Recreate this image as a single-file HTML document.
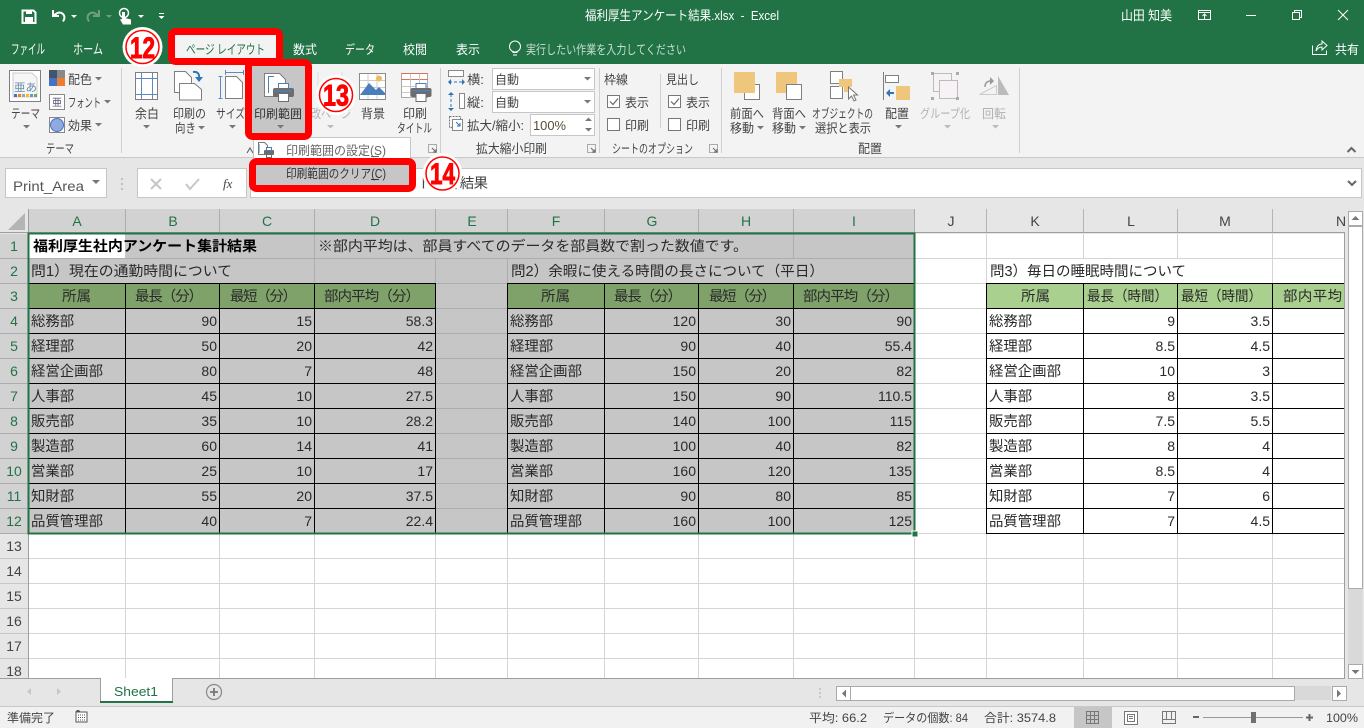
<!DOCTYPE html>
<html lang="ja">
<head>
<meta charset="utf-8">
<title>福利厚生アンケート結果.xlsx - Excel</title>
<style>
html,body{margin:0;padding:0;width:1364px;height:728px;overflow:hidden;background:#fff}
svg{display:block}
text{font-family:"Liberation Sans","Noto Sans CJK JP",sans-serif;white-space:pre}
.r{font-size:12.5px;fill:#444}
.w{font-size:12.5px;fill:#fff}
.g{font-size:12.5px;fill:#b1b1b1}
.c{font-size:14.4px;fill:#2a2a2a}
.n{font-size:14px;fill:#2a2a2a;text-anchor:end}
.ch{font-size:14px;fill:#217346;text-anchor:middle}
.cd{font-size:14px;fill:#444;text-anchor:middle}
.num{font-size:30px;font-weight:bold;fill:#f00;stroke:#f00;stroke-width:.9px;text-anchor:middle}
.st{font-size:12px;fill:#444}
</style>
</head>
<body>
<svg width="1364" height="728" viewBox="0 0 1364 728" xmlns="http://www.w3.org/2000/svg">
<defs>
<path id="k" d="M0 0h7l-3.5 3.5z" fill="#777"/>
<path id="kl" d="M0 0h7l-3.5 3.5z" fill="#bbb"/>
<path id="kw" d="M0 0h6l-3 3z" fill="#fff"/>
<path id="kd" d="M0 0h6l-3 3z" fill="#6e9e84"/>
<g id="pr">
<rect x="5.5" y=".5" width="10" height="7" fill="#fff" stroke="#4a7ebb"/>
<rect x="0" y="5" width="21" height="9" rx="2" fill="#6d6d6d"/>
<rect x="2" y="7" width="17" height="1.5" fill="#4a7ebb"/>
<rect x="5.5" y="10.5" width="10" height="8" fill="#fff" stroke="#6d6d6d"/>
</g>
<g id="launch"><path d="M.5.5h8v8h-8z" fill="none" stroke="#aaa"/><path d="M4 4l4 4M8 5v3H5" fill="none" stroke="#666"/></g>
<rect id="cb" width="12" height="12" fill="#fff" stroke="#777"/>
</defs>

<!-- title bar -->
<rect width="1364" height="64" fill="#217346"/>
<path d="M22.5 10.5h11l2 2v10.500h-13z" fill="none" stroke="#fff" stroke-width="2"/>
<rect x="26" y="10" width="6" height="4" fill="#fff"/><rect x="25" y="17" width="8" height="6" fill="#fff"/>
<path d="M53 10v6h6" fill="none" stroke="#fff" stroke-width="2"/><path d="M54 15.500q5-5 9-1.500q3 3 0 7.500" fill="none" stroke="#fff" stroke-width="2"/>
<use href="#kw" x="71" y="15"/>
<path d="M99 10v6h-6" fill="none" stroke="#6e9e84" stroke-width="2"/><path d="M98 15.500q-5-5-9-1.500q-3 3 0 7.500" fill="none" stroke="#6e9e84" stroke-width="2"/>
<use href="#kd" x="106" y="15"/>
<circle cx="124" cy="13" r="4.500" fill="none" stroke="#fff" stroke-width="1.500"/>
<path d="M122 12h3v6l6 1.500v5h-8l-3-5 2-.5z" fill="#fff"/>
<use href="#kw" x="138" y="15"/>
<path d="M159 13.500h5" stroke="#fff"/><path d="M158.500 16h6l-3 3z" fill="#fff"/>
<text x="585" y="20" font-size="13" fill="#fff" textLength="194" lengthAdjust="spacingAndGlyphs">福利厚生アンケート結果.xlsx  -  Excel</text>
<text x="1121" y="20" font-size="13" fill="#fff" textLength="51" lengthAdjust="spacingAndGlyphs">山田 知美</text>
<rect x="1198.500" y="10.500" width="12" height="9" fill="none" stroke="#fff"/><path d="M1198 12.500h13M1204.500 19v-5M1202.500 16l2-2 2 2" fill="none" stroke="#fff"/>
<path d="M1246 15.500h10" stroke="#fff"/>
<path d="M1292.500 12.500h7v7h-7zM1294.500 12.500v-2h7v7h-2" fill="none" stroke="#fff"/>
<path d="M1338 10l10 10M1348 10l-10 10" stroke="#fff"/>

<!-- tabs -->
<text x="11" y="54" font-size="13.500" fill="#fff" textLength="34" lengthAdjust="spacingAndGlyphs">ファイル</text>
<text x="73" y="54" font-size="13.500" fill="#fff" textLength="30" lengthAdjust="spacingAndGlyphs">ホーム</text>
<text class="w" x="293" y="54" textLength="24" lengthAdjust="spacingAndGlyphs">数式</text>
<text class="w" x="345" y="54" textLength="30" lengthAdjust="spacingAndGlyphs">データ</text>
<text class="w" x="403" y="54" textLength="24" lengthAdjust="spacingAndGlyphs">校閲</text>
<text class="w" x="456" y="54" textLength="24" lengthAdjust="spacingAndGlyphs">表示</text>
<circle cx="515" cy="46.500" r="5.500" fill="none" stroke="#fff"/><path d="M512.500 52.500h5M513 55h4" stroke="#fff"/>
<text x="526" y="54" font-size="12.500" fill="#c9ded2" textLength="160" lengthAdjust="spacingAndGlyphs">実行したい作業を入力してください</text>
<path d="M1312.500 45.500v9h14v-4M1316 51q1-7 6-7v-3l5 4.500-5 4.500v-3q-4 0-6 4z" fill="none" stroke="#fff"/>
<text class="w" x="1335" y="54" textLength="24" lengthAdjust="spacingAndGlyphs">共有</text>

<!-- ribbon -->
<rect y="64" width="1364" height="93" fill="#f3f3f3"/>
<rect y="157" width="1364" height="1" fill="#c8c8c8"/>
<rect y="158" width="1364" height="51" fill="#e6e6e6"/>
<g fill="#d0d0d0"><rect x="121" y="68" width="1" height="85"/><rect x="440" y="68" width="1" height="85"/><rect x="599" y="68" width="1" height="85"/><rect x="721" y="68" width="1" height="85"/><rect x="1019" y="68" width="1" height="85"/><rect x="660" y="74" width="1" height="54"/></g>

<!-- theme group -->
<rect x="9.500" y="70.500" width="31" height="31" fill="#fff" stroke="#7f7f7f"/>
<path d="M13 73h19l5 5v19H13z" fill="#f6f6f6" stroke="#ccc"/>
<text x="14" y="91" font-size="11" fill="#6b8cae" textLength="23" lengthAdjust="spacingAndGlyphs">亜あ</text>
<g><rect x="14" y="94" width="3" height="3" fill="#4472c4"/><rect x="18" y="94" width="3" height="3" fill="#ed7d31"/><rect x="22" y="94" width="3" height="3" fill="#a5a5a5"/><rect x="26" y="94" width="3" height="3" fill="#ffc000"/><rect x="30" y="94" width="3" height="3" fill="#5b9bd5"/><rect x="34" y="94" width="3" height="3" fill="#70ad47"/></g>
<text class="r" x="11" y="118" textLength="29" lengthAdjust="spacingAndGlyphs">テーマ</text>
<use href="#k" x="23" y="125"/>
<rect x="49" y="70" width="8" height="8" fill="#44546a"/><rect x="57" y="70" width="8" height="8" fill="#8a8a8a"/><rect x="49" y="78" width="8" height="8" fill="#4472c4"/><rect x="57" y="78" width="8" height="8" fill="#ed7d31"/>
<text class="r" x="68" y="84" textLength="24" lengthAdjust="spacingAndGlyphs">配色</text><use href="#k" x="95" y="77"/>
<rect x="49.500" y="94.500" width="15" height="15" fill="#fff" stroke="#888"/>
<text x="52" y="106" font-size="10" fill="#557" textLength="10">亜</text>
<text class="r" x="68" y="107" textLength="33" lengthAdjust="spacingAndGlyphs">フォント</text><use href="#k" x="104" y="100"/>
<rect x="49.500" y="117.500" width="15" height="15" fill="#fff" stroke="#888"/><circle cx="57" cy="125" r="6.500" fill="#8faadc" stroke="#4472c4"/>
<text class="r" x="68" y="130" textLength="24" lengthAdjust="spacingAndGlyphs">効果</text><use href="#k" x="95" y="123"/>
<text class="r" x="46" y="153" textLength="28" lengthAdjust="spacingAndGlyphs">テーマ</text>

<!-- page setup -->
<rect x="135.500" y="72.500" width="22" height="27" fill="#fff" stroke="#7f7f7f"/>
<path d="M141.500 73v26M152.500 73v26M136 78.500h21M136 94.500h21" stroke="#5b8ac5"/>
<text class="r" x="135" y="118" textLength="24" lengthAdjust="spacingAndGlyphs">余白</text><use href="#k" x="143" y="125"/>
<path d="M174.500 71.500h11l6 6v15h-17z" fill="#fff" stroke="#7f7f7f"/>
<path d="M179.500 83.500h15l7 6v10.500h-22z" fill="#fff" stroke="#7f7f7f"/>
<path d="M193 72q7-1 6 7" fill="none" stroke="#2e75b6" stroke-width="2"/><path d="M195 77h8l-4 5z" fill="#2e75b6"/>
<text class="r" x="173" y="118" textLength="33" lengthAdjust="spacingAndGlyphs">印刷の</text>
<text class="r" x="175" y="132.500" textLength="21" lengthAdjust="spacingAndGlyphs">向き</text><use href="#k" x="198" y="126"/>
<path d="M225.500 76.500h11l6 6v16h-17z" fill="#fff" stroke="#7f7f7f"/>
<path d="M220.500 76v23M218.500 76.500h4M218.500 98.500h4M225 72.500h19M225.500 70v5M243.500 70v5" fill="none" stroke="#5b8ac5"/>
<text class="r" x="216" y="118" textLength="29" lengthAdjust="spacingAndGlyphs">サイズ</text><use href="#k" x="229" y="125"/>

<!-- hidden page break label -->
<path d="M318 72v30M342 72v30" stroke="#ddd"/>
<text class="g" x="311" y="118" textLength="40" lengthAdjust="spacingAndGlyphs">改ページ</text><use href="#kl" x="327" y="125"/>

<!-- background -->
<rect x="359.500" y="73.500" width="26" height="26" fill="#fff" stroke="#8a8a8a"/>
<path d="M360 80.500h25M360 87.500h25M360 94.500h25M368 74v25M377 74v25" stroke="#ccc"/>
<circle cx="379" cy="78.500" r="3" fill="#f0b860"/>
<path d="M360 95l9-12 7 7 3-3 6 6v2h-25z" fill="#4a7ebb"/>
<text class="r" x="361" y="118" textLength="24" lengthAdjust="spacingAndGlyphs">背景</text>

<!-- print titles -->
<rect x="401.500" y="73.500" width="26" height="24" fill="#fff" stroke="#aaa"/>
<path d="M401 73.500h27M401 79.500h27" stroke="#d9725a"/><path d="M410.500 74v24M419.500 74v24M402 86.500h25M402 92.500h25" stroke="#c8c8c8"/>
<use href="#pr" x="410.500" y="83"/>
<text class="r" x="403" y="118" textLength="24" lengthAdjust="spacingAndGlyphs">印刷</text>
<text class="r" x="397" y="132.500" textLength="35" lengthAdjust="spacingAndGlyphs">タイトル</text>
<path d="M247 153l3-5 3 5" fill="none" stroke="#555"/>
<use href="#launch" x="428" y="144"/>

<!-- scale group -->
<path d="M448.500 70.500h15v6h-15z" fill="#fff" stroke="#888"/><path d="M449 82h15" stroke="#2e75b6" stroke-dasharray="3 2"/><path d="M448 82l3-3v6zM465 82l-3-3v6z" fill="#2e75b6"/>
<text class="r" x="467" y="84" textLength="17" lengthAdjust="spacingAndGlyphs">横:</text>
<rect x="492.500" y="68.500" width="102" height="21" fill="#fff" stroke="#c6c6c6"/>
<text class="r" x="495" y="84" textLength="24" lengthAdjust="spacingAndGlyphs">自動</text><use href="#k" x="584" y="77"/>
<rect x="459.500" y="93.500" width="5" height="15" fill="#fff" stroke="#888"/><path d="M451 94v15" stroke="#2e75b6" stroke-dasharray="3 2"/><path d="M451 92l-3 3h6zM451 111l-3-3h6z" fill="#2e75b6"/>
<text class="r" x="467" y="107" textLength="17" lengthAdjust="spacingAndGlyphs">縦:</text>
<rect x="492.500" y="91.500" width="102" height="21" fill="#fff" stroke="#c6c6c6"/>
<text class="r" x="495" y="107" textLength="24" lengthAdjust="spacingAndGlyphs">自動</text><use href="#k" x="584" y="100"/>
<rect x="449.500" y="116.500" width="11" height="11" fill="#f8f8f8" stroke="#777" stroke-dasharray="2 1"/><rect x="452.500" y="119.500" width="10" height="11" fill="#fff" stroke="#888"/><path d="M456 122l4 4M460 123v3h-3" fill="none" stroke="#2e75b6"/>
<text class="r" x="467" y="130" textLength="57" lengthAdjust="spacingAndGlyphs">拡大/縮小:</text>
<rect x="530.500" y="114.500" width="64" height="21" fill="#fff" stroke="#c6c6c6"/>
<text x="533" y="130" font-size="13" fill="#5a4a3a" textLength="33" lengthAdjust="spacingAndGlyphs">100%</text>
<path d="M585 121l3.500-3.500 3.500 3.500zM585 128l3.500 3.500 3.500-3.500z" fill="#777"/>
<text class="r" x="476" y="153" textLength="71" lengthAdjust="spacingAndGlyphs">拡大縮小印刷</text>
<use href="#launch" x="587" y="144"/>

<!-- sheet options -->
<text class="r" x="604" y="84" textLength="24" lengthAdjust="spacingAndGlyphs">枠線</text>
<text class="r" x="666" y="84" textLength="33" lengthAdjust="spacingAndGlyphs">見出し</text>
<use href="#cb" x="607.500" y="95.500"/><path d="M610 101.500l3 3 5-6" fill="none" stroke="#666" stroke-width="1.200"/>
<text class="r" x="625" y="107" textLength="24" lengthAdjust="spacingAndGlyphs">表示</text>
<use href="#cb" x="607.500" y="118.500"/>
<text class="r" x="625" y="130" textLength="24" lengthAdjust="spacingAndGlyphs">印刷</text>
<use href="#cb" x="668.500" y="95.500"/><path d="M671 101.500l3 3 5-6" fill="none" stroke="#666" stroke-width="1.200"/>
<text class="r" x="686" y="107" textLength="24" lengthAdjust="spacingAndGlyphs">表示</text>
<use href="#cb" x="668.500" y="118.500"/>
<text class="r" x="686" y="130" textLength="24" lengthAdjust="spacingAndGlyphs">印刷</text>
<text class="r" x="612" y="153" textLength="81" lengthAdjust="spacingAndGlyphs">シートのオプション</text>
<use href="#launch" x="709" y="144"/>

<!-- arrange -->
<rect x="744.500" y="84.500" width="15" height="15" fill="#fff" stroke="#7f7f7f"/>
<rect x="734" y="72" width="21" height="21" fill="#eec77d"/>
<text class="r" x="730" y="118" textLength="34" lengthAdjust="spacingAndGlyphs">前面へ</text>
<text class="r" x="730" y="132.500" textLength="24" lengthAdjust="spacingAndGlyphs">移動</text><use href="#k" x="757" y="126"/>
<rect x="776" y="72" width="21" height="21" fill="#eec77d"/>
<rect x="786.500" y="84.500" width="15" height="15" fill="#fff" stroke="#7f7f7f"/>
<text class="r" x="772" y="118" textLength="34" lengthAdjust="spacingAndGlyphs">背面へ</text>
<text class="r" x="772" y="132.500" textLength="24" lengthAdjust="spacingAndGlyphs">移動</text><use href="#k" x="799" y="126"/>
<rect x="830.500" y="71.500" width="12" height="12" fill="#fff" stroke="#7f7f7f"/>
<rect x="830.500" y="86.500" width="12" height="12" fill="#fff" stroke="#7f7f7f"/>
<path d="M839 79h13v8h-4v5h-4v-5h-5z" fill="#eec77d"/>
<path d="M848.500 87v12l3-3 2.500 5 2-1-2.500-5h4z" fill="#fff" stroke="#777"/>
<text class="r" x="812" y="118" textLength="61" lengthAdjust="spacingAndGlyphs">オブジェクトの</text>
<text class="r" x="815" y="132.500" textLength="56" lengthAdjust="spacingAndGlyphs">選択と表示</text>
<path d="M883.500 72v28" stroke="#7f7f7f"/>
<rect x="885.500" y="75.500" width="13" height="7" fill="#fff" stroke="#7f7f7f"/>
<rect x="896" y="86" width="14" height="14" fill="#eec77d"/>
<path d="M886 93l4-4v3h4v2h-4v3z" fill="#2e75b6"/>
<text class="r" x="885" y="118" textLength="24" lengthAdjust="spacingAndGlyphs">配置</text><use href="#k" x="895" y="125"/>
<text class="r" x="858" y="153" textLength="24" lengthAdjust="spacingAndGlyphs">配置</text>
<rect x="933.500" y="73.500" width="18" height="18" fill="#f6f2f6" stroke="#bbb"/>
<rect x="939.500" y="80.500" width="18" height="18" fill="#f6f2f6" stroke="#bbb"/>
<g fill="#aaa"><rect x="931" y="72" width="3" height="3"/><rect x="956" y="72" width="3" height="3"/><rect x="931" y="97" width="3" height="3"/><rect x="956" y="97" width="3" height="3"/></g>
<text class="g" x="920" y="118" textLength="50" lengthAdjust="spacingAndGlyphs">グループ化</text><use href="#kl" x="944" y="125"/>
<path d="M979.500 94.500l17-9v9z" fill="#f3f3f3" stroke="#ccc"/><path d="M998 76l11 19h-11z" fill="#bbb"/>
<path d="M985 87q0-6 6-6" fill="none" stroke="#999" stroke-width="1.500"/><path d="M990 77l4 4-4 4z" fill="#999"/>
<text class="g" x="982" y="118" textLength="24" lengthAdjust="spacingAndGlyphs">回転</text><use href="#kl" x="992" y="125"/>
<path d="M1347.500 152l4-4 4 4" fill="none" stroke="#666" stroke-width="2"/>

<!-- formula bar -->
<rect x="5.500" y="168.500" width="101" height="29" fill="#fff" stroke="#c6c6c6"/>
<text x="13" y="191" font-size="14" fill="#555" textLength="71" lengthAdjust="spacingAndGlyphs">Print_Area</text>
<path d="M92 180h8l-4 4z" fill="#777"/>
<path d="M122 178v2M122 183v2M122 188v2" stroke="#999"/>
<rect x="137.500" y="168.500" width="109" height="29" fill="#fff" stroke="#c6c6c6"/>
<path d="M151 179l10 10M161 179l-10 10" stroke="#c6c6c6" stroke-width="2"/>
<path d="M186 184l4 5 9-10" fill="none" stroke="#c6c6c6" stroke-width="2"/>
<text x="223" y="188" font-size="13" font-style="italic" fill="#444" style="font-family:'Liberation Serif',serif">fx</text>
<rect x="250.500" y="168.500" width="1111" height="29" fill="#fff" stroke="#c6c6c6"/>
<text x="418" y="188" font-size="14.400" fill="#444" textLength="70" lengthAdjust="spacing">ト集計結果</text>
<path d="M1348 181l4 4 4-4" fill="none" stroke="#666" stroke-width="2"/>

<!-- sheet base -->
<rect x="0" y="209" width="1345" height="25" fill="#e6e6e6"/>
<rect x="0" y="233" width="28" height="445" fill="#e6e6e6"/>
<rect x="29" y="209" width="886" height="24" fill="#d2d2d2"/>
<rect x="0" y="234" width="28" height="300" fill="#d2d2d2"/>
<path d="M8 230l17-17v17z" fill="#b4b4b4"/>
<rect x="29" y="234" width="1316" height="444" fill="#fff"/>
<rect x="29" y="234" width="886" height="300" fill="#c6c6c6"/>
<rect x="29" y="234" width="96" height="24" fill="#fff"/>

<!-- gridlines unselected -->
<g stroke="#d4d4d4">
<path d="M915 258.500H1345M915 283.500H1345M915 308.500H1345M915 333.500H1345M915 358.500H1345M915 383.500H1345M915 408.500H1345M915 433.500H1345M915 458.500H1345M915 483.500H1345M915 508.500H1345M915 533.500H1345"/>
<path d="M29 558.500H1345M29 583.500H1345M29 608.500H1345M29 633.500H1345M29 658.500H1345"/>
<path d="M986.500 234V678M1083.500 234V258M1177.500 234V258M1272.500 234V678M1083.500 283V678M1177.500 283V678"/>
<path d="M125.500 534V678M219.500 534V678M314.500 534V678M435.500 534V678M507.500 534V678M604.500 534V678M698.500 534V678M793.500 534V678M914.500 534V678"/>
</g>
<!-- gridlines selected -->
<g stroke="#adadad">
<path d="M29 258.500H914M29 283.500H914M435 308.500H508M435 333.500H508M435 358.500H508M435 383.500H508M435 408.500H508M435 433.500H508M435 458.500H508M435 483.500H508M435 508.500H508"/>
<path d="M314.500 234V283M435.500 258V283M793.500 234V258M507.500 258V283"/>
</g>
<!-- green header fills -->
<rect x="29" y="284" width="406" height="24" fill="#7fa16a"/>
<rect x="508" y="284" width="406" height="24" fill="#7fa16a"/>
<rect x="987" y="284" width="358" height="24" fill="#a9d08e"/>
<!-- table borders -->
<g stroke="#000">
<path d="M29 283.500H436M29 308.500H436M29 333.500H436M29 358.500H436M29 383.500H436M29 408.500H436M29 433.500H436M29 458.500H436M29 483.500H436M29 508.500H436M29 533.500H436"/>
<path d="M507 283.500H915M507 308.500H915M507 333.500H915M507 358.500H915M507 383.500H915M507 408.500H915M507 433.500H915M507 458.500H915M507 483.500H915M507 508.500H915M507 533.500H915"/>
<path d="M986 283.500H1345M986 308.500H1345M986 333.500H1345M986 358.500H1345M986 383.500H1345M986 408.500H1345M986 433.500H1345M986 458.500H1345M986 483.500H1345M986 508.500H1345M986 533.500H1345"/>
<path d="M125.500 283V534M219.500 283V534M314.500 283V534M435.500 283V534"/>
<path d="M507.500 283V534M604.500 283V534M698.500 283V534M793.500 283V534M914.500 283V534"/>
<path d="M986.500 283V534M1083.500 283V534M1177.500 283V534M1272.500 283V534"/>
</g>

<!-- column headers -->
<path d="M125.500 209V233M219.500 209V233M314.500 209V233M435.500 209V233M507.500 209V233M604.500 209V233M698.500 209V233M793.500 209V233M914.500 209V233" stroke="#adadad"/>
<path d="M986.500 209V233M1083.500 209V233M1177.500 209V233M1272.500 209V233" stroke="#b4b4b4"/>
<path d="M0 232.500H1345M28.500 209V678M1344.500 233V678M0 678.500H1345" stroke="#9e9e9e"/>
<text class="ch" x="77" y="226">A</text><text class="ch" x="173" y="226">B</text><text class="ch" x="267" y="226">C</text><text class="ch" x="375" y="226">D</text><text class="ch" x="472" y="226">E</text><text class="ch" x="556" y="226">F</text><text class="ch" x="652" y="226">G</text><text class="ch" x="746" y="226">H</text><text class="ch" x="854" y="226">I</text>
<text class="cd" x="951" y="226">J</text><text class="cd" x="1035" y="226">K</text><text class="cd" x="1131" y="226">L</text><text class="cd" x="1225" y="226">M</text>
<text class="cd" x="1341" y="226">N</text>
<rect x="1345" y="209" width="19" height="25" fill="#e6e6e6"/>

<!-- row headers -->
<path d="M0 258.500H28M0 283.500H28M0 308.500H28M0 333.500H28M0 358.500H28M0 383.500H28M0 408.500H28M0 433.500H28M0 458.500H28M0 483.500H28M0 508.500H28M0 533.500H28" stroke="#adadad"/>
<path d="M0 558.500H28M0 583.500H28M0 608.500H28M0 633.500H28M0 658.500H28" stroke="#c6c6c6"/>
<text class="ch" x="14" y="251">1</text><text class="ch" x="14" y="276">2</text><text class="ch" x="14" y="301">3</text><text class="ch" x="14" y="326">4</text><text class="ch" x="14" y="351">5</text><text class="ch" x="14" y="376">6</text><text class="ch" x="14" y="401">7</text><text class="ch" x="14" y="426">8</text><text class="ch" x="14" y="451">9</text><text class="ch" x="14" y="476">10</text><text class="ch" x="14" y="501">11</text><text class="ch" x="14" y="526">12</text>
<text class="cd" x="14" y="551">13</text><text class="cd" x="14" y="576">14</text><text class="cd" x="14" y="601">15</text><text class="cd" x="14" y="626">16</text><text class="cd" x="14" y="651">17</text><text class="cd" x="14" y="676">18</text>

<!-- top text -->
<text x="33" y="251" font-size="14.400" font-weight="bold" fill="#000" textLength="224" lengthAdjust="spacingAndGlyphs">福利厚生社内アンケート集計結果</text>
<text class="c" x="318" y="251" textLength="430" lengthAdjust="spacingAndGlyphs">※部内平均は、部員すべてのデータを部員数で割った数値です。</text>
<text class="c" x="31" y="276" textLength="201" lengthAdjust="spacingAndGlyphs">問1）現在の通勤時間について</text>
<text class="c" x="511" y="276" textLength="313" lengthAdjust="spacingAndGlyphs">問2）余暇に使える時間の長さについて（平日）</text>
<text class="c" x="990" y="276" textLength="196" lengthAdjust="spacingAndGlyphs">問3）毎日の睡眠時間について</text>

<!-- header rows -->
<text class="c" x="62" y="301" textLength="29">所属</text><text class="c" x="135" y="301" textLength="68">最長（分）</text><text class="c" x="230" y="301" textLength="67">最短（分）</text><text class="c" x="324" y="301" textLength="96">部内平均（分）</text>
<text class="c" x="541" y="301" textLength="29">所属</text><text class="c" x="614" y="301" textLength="68">最長（分）</text><text class="c" x="709" y="301" textLength="67">最短（分）</text><text class="c" x="803" y="301" textLength="96">部内平均（分）</text>
<text class="c" x="1021" y="301" textLength="29">所属</text><text class="c" x="1087" y="301" textLength="81" lengthAdjust="spacingAndGlyphs">最長（時間）</text><text class="c" x="1181" y="301" textLength="81" lengthAdjust="spacingAndGlyphs">最短（時間）</text><text class="c" x="1283" y="301" textLength="59">部内平均</text>

<!-- data rows -->
<g>
<text class="c" x="31" y="326">総務部</text><text class="n" x="217" y="326">90</text><text class="n" x="312" y="326">15</text><text class="n" x="433" y="326">58.3</text><text class="c" x="510" y="326">総務部</text><text class="n" x="696" y="326">120</text><text class="n" x="791" y="326">30</text><text class="n" x="912" y="326">90</text><text class="c" x="989" y="326">総務部</text><text class="n" x="1175" y="326">9</text><text class="n" x="1270" y="326">3.5</text>
<text class="c" x="31" y="351">経理部</text><text class="n" x="217" y="351">50</text><text class="n" x="312" y="351">20</text><text class="n" x="433" y="351">42</text><text class="c" x="510" y="351">経理部</text><text class="n" x="696" y="351">90</text><text class="n" x="791" y="351">40</text><text class="n" x="912" y="351">55.4</text><text class="c" x="989" y="351">経理部</text><text class="n" x="1175" y="351">8.5</text><text class="n" x="1270" y="351">4.5</text>
<text class="c" x="31" y="376">経営企画部</text><text class="n" x="217" y="376">80</text><text class="n" x="312" y="376">7</text><text class="n" x="433" y="376">48</text><text class="c" x="510" y="376">経営企画部</text><text class="n" x="696" y="376">150</text><text class="n" x="791" y="376">20</text><text class="n" x="912" y="376">82</text><text class="c" x="989" y="376">経営企画部</text><text class="n" x="1175" y="376">10</text><text class="n" x="1270" y="376">3</text>
<text class="c" x="31" y="401">人事部</text><text class="n" x="217" y="401">45</text><text class="n" x="312" y="401">10</text><text class="n" x="433" y="401">27.5</text><text class="c" x="510" y="401">人事部</text><text class="n" x="696" y="401">150</text><text class="n" x="791" y="401">90</text><text class="n" x="912" y="401">110.5</text><text class="c" x="989" y="401">人事部</text><text class="n" x="1175" y="401">8</text><text class="n" x="1270" y="401">3.5</text>
<text class="c" x="31" y="426">販売部</text><text class="n" x="217" y="426">35</text><text class="n" x="312" y="426">10</text><text class="n" x="433" y="426">28.2</text><text class="c" x="510" y="426">販売部</text><text class="n" x="696" y="426">140</text><text class="n" x="791" y="426">100</text><text class="n" x="912" y="426">115</text><text class="c" x="989" y="426">販売部</text><text class="n" x="1175" y="426">7.5</text><text class="n" x="1270" y="426">5.5</text>
<text class="c" x="31" y="451">製造部</text><text class="n" x="217" y="451">60</text><text class="n" x="312" y="451">14</text><text class="n" x="433" y="451">41</text><text class="c" x="510" y="451">製造部</text><text class="n" x="696" y="451">100</text><text class="n" x="791" y="451">40</text><text class="n" x="912" y="451">82</text><text class="c" x="989" y="451">製造部</text><text class="n" x="1175" y="451">8</text><text class="n" x="1270" y="451">4</text>
<text class="c" x="31" y="476">営業部</text><text class="n" x="217" y="476">25</text><text class="n" x="312" y="476">10</text><text class="n" x="433" y="476">17</text><text class="c" x="510" y="476">営業部</text><text class="n" x="696" y="476">160</text><text class="n" x="791" y="476">120</text><text class="n" x="912" y="476">135</text><text class="c" x="989" y="476">営業部</text><text class="n" x="1175" y="476">8.5</text><text class="n" x="1270" y="476">4</text>
<text class="c" x="31" y="501">知財部</text><text class="n" x="217" y="501">55</text><text class="n" x="312" y="501">20</text><text class="n" x="433" y="501">37.5</text><text class="c" x="510" y="501">知財部</text><text class="n" x="696" y="501">90</text><text class="n" x="791" y="501">80</text><text class="n" x="912" y="501">85</text><text class="c" x="989" y="501">知財部</text><text class="n" x="1175" y="501">7</text><text class="n" x="1270" y="501">6</text>
<text class="c" x="31" y="526">品質管理部</text><text class="n" x="217" y="526">40</text><text class="n" x="312" y="526">7</text><text class="n" x="433" y="526">22.4</text><text class="c" x="510" y="526">品質管理部</text><text class="n" x="696" y="526">160</text><text class="n" x="791" y="526">100</text><text class="n" x="912" y="526">125</text><text class="c" x="989" y="526">品質管理部</text><text class="n" x="1175" y="526">7</text><text class="n" x="1270" y="526">4.5</text>
</g>

<!-- selection border -->
<rect x="28.500" y="233.500" width="886" height="300" fill="none" stroke="#217346" stroke-width="2"/>
<rect x="912" y="531" width="6" height="6" fill="#217346" stroke="#fff"/>

<!-- vertical scrollbar -->
<rect x="1345" y="209" width="19" height="470" fill="#e6e6e6"/>
<rect x="1348" y="226" width="14.500" height="438" fill="#d9d9d9"/>
<rect x="1348.500" y="211.500" width="14" height="14" fill="#fff" stroke="#aaa"/><path d="M1351.500 220l4-4 4 4z" fill="#777"/>
<rect x="1348.500" y="226.500" width="14" height="362" fill="#fff" stroke="#aaa"/>
<rect x="1348.500" y="664.500" width="14" height="14" fill="#fff" stroke="#aaa"/><path d="M1351.500 670l4 4 4-4z" fill="#777"/>

<!-- sheet tabs -->
<rect x="0" y="679" width="1364" height="27" fill="#e6e6e6"/>
<path d="M0 678.500H1345" stroke="#9e9e9e"/>
<rect x="100.500" y="678.500" width="72" height="24" fill="#fff" stroke="#9e9e9e"/>
<rect x="101" y="678" width="71" height="2" fill="#fff"/>
<rect x="100" y="701" width="73" height="2" fill="#217346"/>
<text x="114" y="696" font-size="13" fill="#217346" textLength="44" lengthAdjust="spacingAndGlyphs">Sheet1</text>
<path d="M31 688v7l-4-3.500zM57 688v7l4-3.500z" fill="#c6c6c6"/>
<circle cx="214" cy="692" r="7.500" fill="none" stroke="#888" stroke-width="1.200"/><path d="M210 692h8M214 688v8" stroke="#777" stroke-width="1.800"/>
<path d="M820 688v2M820 692v2M820 696v2" stroke="#aaa"/>
<rect x="851" y="686" width="480" height="14" fill="#d9d9d9"/>
<rect x="836.500" y="686.500" width="14" height="14" fill="#fff" stroke="#aaa"/><path d="M846 689.500v8l-4-4z" fill="#777"/>
<rect x="850.500" y="686.500" width="444" height="14" fill="#fff" stroke="#aaa"/>
<rect x="1332.500" y="686.500" width="14" height="14" fill="#fff" stroke="#aaa"/><path d="M1337 689.500v8l4-4z" fill="#777"/>

<!-- status bar -->
<rect x="0" y="706" width="1364" height="22" fill="#f1f1f1"/>
<rect x="0" y="706" width="1364" height="1" fill="#c8c8c8"/>
<text class="st" x="7" y="722" textLength="48" lengthAdjust="spacingAndGlyphs">準備完了</text>
<circle cx="78" cy="712.500" r="2.500" fill="#555"/>
<rect x="76" y="712" width="11" height="10" fill="#fff" stroke="#555"/><path d="M78 715h7M78 717.500h7M78 720h7" stroke="#555" stroke-dasharray="1 1"/>
<text class="st" x="809" y="722" textLength="58" lengthAdjust="spacingAndGlyphs">平均: 66.2</text>
<text class="st" x="883" y="722" textLength="85" lengthAdjust="spacingAndGlyphs">データの個数: 84</text>
<text class="st" x="984" y="722" textLength="72" lengthAdjust="spacingAndGlyphs">合計: 3574.8</text>
<rect x="1074" y="707" width="38" height="21" fill="#c6c6c6"/>
<path d="M1086.500 711.500h12v12h-12zM1090.500 712v11M1094.500 712v11M1087 715.500h11M1087 719.500h11" fill="none" stroke="#777"/>
<path d="M1124.500 711.500h13v13h-13z" fill="#fff" stroke="#777"/><path d="M1127.500 714.500h7v7h-7zM1129 716.500h4M1129 718.500h4" fill="none" stroke="#777"/>
<path d="M1162.500 711.500h13v12h-13zM1163 719.500h12M1166.500 712v7M1171.500 712v7" fill="none" stroke="#777"/>
<rect x="1193" y="716" width="6" height="2" fill="#666"/>
<rect x="1203" y="717" width="100" height="1" fill="#999"/>
<rect x="1251" y="712" width="5" height="11" fill="#707070"/>
<path d="M1306 717.500h7M1309.500 714v7" stroke="#666" stroke-width="2"/>
<text class="st" x="1326" y="722" textLength="32" lengthAdjust="spacingAndGlyphs">100%</text>

<!-- callouts: dropdown -->
<rect x="253.500" y="137.500" width="157" height="30" fill="#fff" stroke="#c6c6c6"/>
<path d="M258.500 142.500h6l3 3v9h-9z" fill="#fff" stroke="#777"/><path d="M259 144v9" stroke="#4a7ebb"/>
<rect x="264" y="150" width="10" height="5" rx="1" fill="#6d6d6d"/><rect x="266.500" y="147.500" width="5" height="3" fill="#fff" stroke="#4a7ebb"/><rect x="266.500" y="154.500" width="5" height="3" fill="#fff" stroke="#6d6d6d"/>
<text x="286" y="155" font-size="12.500" fill="#666" textLength="100" lengthAdjust="spacingAndGlyphs">印刷範囲の設定(S)</text>
<path d="M371 156.500h8" stroke="#666"/>

<!-- red box tab -->
<rect x="171.500" y="31.500" width="108" height="30" rx="4" fill="#f3f3f3" stroke="#f00" stroke-width="7"/>
<text x="186" y="54" font-size="13" fill="#217346" textLength="79" lengthAdjust="spacingAndGlyphs">ページ レイアウト</text>

<!-- red box 13 -->
<rect x="248.500" y="62.500" width="60" height="74" rx="4" fill="#c6c6c6" stroke="#f00" stroke-width="7"/>
<path d="M264.500 73.500h15l6 6v17h-21z" fill="#fff" stroke="#7f7f7f"/><path d="M268.500 76v17" stroke="#4a7ebb"/><path d="M268 76.500h6" stroke="#4a7ebb"/>
<use href="#pr" x="273" y="83"/>
<text x="254" y="118" font-size="12" fill="#333" textLength="48" lengthAdjust="spacingAndGlyphs">印刷範囲</text>
<use href="#k" x="277" y="125"/>

<!-- red box 14 -->
<rect x="252.500" y="161.500" width="160" height="27" rx="4" fill="#c6c6c6" stroke="#f00" stroke-width="7"/>
<text x="286" y="178" font-size="12.500" fill="#333" textLength="100" lengthAdjust="spacingAndGlyphs">印刷範囲のクリア(C)</text>
<path d="M371 179.500h8" stroke="#333"/>

<!-- circled numbers -->
<circle cx="142.500" cy="47" r="20" fill="#fff"/>
<circle cx="142.500" cy="47" r="16.500" fill="#fff" stroke="#f00" stroke-width="1.500"/>
<text class="num" x="142.500" y="58" textLength="25" lengthAdjust="spacingAndGlyphs">12</text>
<circle cx="336" cy="95" r="20" fill="#fff"/>
<circle cx="336" cy="95" r="16.500" fill="#fff" stroke="#f00" stroke-width="1.500"/>
<text class="num" x="336" y="105.500" textLength="26" lengthAdjust="spacingAndGlyphs">13</text>
<circle cx="442.500" cy="173.500" r="20" fill="#fff"/>
<circle cx="442.500" cy="173.500" r="16.500" fill="#fff" stroke="#f00" stroke-width="1.500"/>
<text class="num" x="442.500" y="184" textLength="25" lengthAdjust="spacingAndGlyphs">14</text>
</svg>
</body>
</html>
